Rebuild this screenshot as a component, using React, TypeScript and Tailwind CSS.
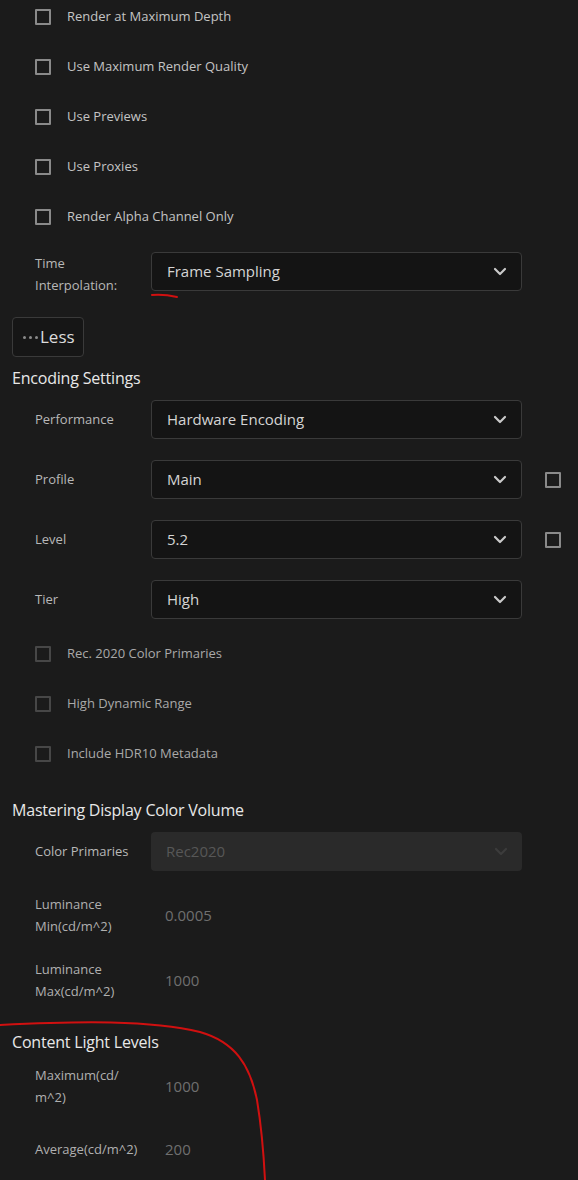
import React from 'react';

const font = { fontFamily: '"Open Sans", "Noto Sans", sans-serif' };

const Chevron = ({ dim }: { dim?: boolean }) => (
  <svg width="14" height="9" viewBox="0 0 14 9" fill="none">
    <path
      d="M2 2 L7 7 L12 2"
      stroke={dim ? '#3c3c3c' : '#c9c9c9'}
      strokeWidth="2.2"
      strokeLinecap="round"
      strokeLinejoin="round"
    />
  </svg>
);

const Box = ({ dim }: { dim?: boolean }) => (
  <span
    className={`block w-[16px] h-[16px] shrink-0 border-2 rounded-[1px] ${
      dim ? 'border-[#474747]' : 'border-[#8a8a8a]'
    }`}
  />
);

const CheckRow = ({ label, dim }: { label: string; dim?: boolean }) => (
  <div className="flex items-center h-[32px] pl-[23px] gap-[16px]">
    <Box dim={dim} />
    <span className={`text-[13px] ${dim ? 'text-[#a9a9a9]' : 'text-[#c4c4c4]'}`}>{label}</span>
  </div>
);

const Select = ({ value, disabled }: { value: string; disabled?: boolean }) => (
  <div
    className={`flex items-center justify-between w-[371px] h-[39px] pl-[15px] pr-[14px] rounded-[4px] ${
      disabled ? 'bg-[#2a2a2a]' : 'bg-[#141414] border border-[#3a3a3a]'
    }`}
  >
    <span className={`text-[15px] ${disabled ? 'text-[#575757]' : 'text-[#d4d4d4]'}`}>{value}</span>
    <Chevron dim={disabled} />
  </div>
);

const SelectRow = ({ label, value, box, disabled }: { label: string; value: string; box?: boolean; disabled?: boolean }) => (
  <div className="flex items-center pl-[23px]">
    <span className="w-[116px] text-[13px] text-[#b8b8b8]">{label}</span>
    <Select value={value} disabled={disabled} />
    {box && (
      <span className="ml-[23px]">
        <Box />
      </span>
    )}
  </div>
);

const ValueRow = ({ lines, value }: { lines: string[]; value: string }) => (
  <div className="flex items-center pl-[23px]">
    <div className="w-[130px] text-[13px] leading-[22px] text-[#b0b0b0]">
      {lines.map((l) => (
        <div key={l}>{l}</div>
      ))}
    </div>
    <span className="text-[15px] text-[#6f6f6f]">{value}</span>
  </div>
);

const Heading = ({ children }: { children: React.ReactNode }) => (
  <h3 className="text-[16px] font-medium leading-[22px] text-[#e8e8e8] tracking-[-0.2px]">{children}</h3>
);

export default function App() {
  return (
    <div className="relative w-[578px] h-[1180px] overflow-hidden bg-[#1b1b1b]" style={font}>
      <div className="flex flex-col px-[12px] pt-[1px]">
        {/* Render options */}
        <div className="flex flex-col gap-[18px]">
          <CheckRow label="Render at Maximum Depth" />
          <CheckRow label="Use Maximum Render Quality" />
          <CheckRow label="Use Previews" />
          <CheckRow label="Use Proxies" />
          <CheckRow label="Render Alpha Channel Only" />
        </div>

        <div className="flex items-start pl-[23px] mt-[19px]">
          <div className="w-[116px] text-[13px] leading-[22px] text-[#b8b8b8]">
            <div>Time</div>
            <div>Interpolation:</div>
          </div>
          <Select value="Frame Sampling" />
        </div>

        <button className="mt-[21px] self-start flex items-center w-[72px] h-[40px] pl-[10px] rounded-[4px] bg-[#161616] border border-[#3a3a3a]">
          <span className="flex items-center gap-[3px] mr-[2px]">
            <span className="block w-[3px] h-[3px] rounded-full bg-[#8a8a8a]" />
            <span className="block w-[3px] h-[3px] rounded-full bg-[#8a8a8a]" />
            <span className="block w-[3px] h-[3px] rounded-full bg-[#8a8a8a]" />
          </span>
          <span className="text-[17px] text-[#dcdcdc]">Less</span>
        </button>

        {/* Encoding */}
        <div className="mt-[10px]">
          <Heading>Encoding Settings</Heading>
        </div>
        <div className="flex flex-col gap-[21px] mt-[11px]">
          <SelectRow label="Performance" value="Hardware Encoding" />
          <SelectRow label="Profile" value="Main" box />
          <SelectRow label="Level" value="5.2" box />
          <SelectRow label="Tier" value="High" />
        </div>

        <div className="flex flex-col gap-[18px] mt-[19px]">
          <CheckRow label="Rec. 2020 Color Primaries" dim />
          <CheckRow label="High Dynamic Range" dim />
          <CheckRow label="Include HDR10 Metadata" dim />
        </div>

        {/* Mastering */}
        <div className="mt-[29px]">
          <Heading>Mastering Display Color Volume</Heading>
        </div>
        <div className="mt-[11px]">
          <SelectRow label="Color Primaries" value="Rec2020" disabled />
        </div>
        <div className="flex flex-col gap-[21px] mt-[22px]">
          <ValueRow lines={['Luminance', 'Min(cd/m^2)']} value="0.0005" />
          <ValueRow lines={['Luminance', 'Max(cd/m^2)']} value="1000" />
        </div>

        {/* Content light */}
        <div className="mt-[29px]">
          <Heading>Content Light Levels</Heading>
        </div>
        <div className="flex flex-col gap-[30px] mt-[11px]">
          <ValueRow lines={['Maximum(cd/', 'm^2)']} value="1000" />
          <ValueRow lines={['Average(cd/m^2)']} value="200" />
        </div>
      </div>

      {/* hand-drawn red annotations */}
      <svg className="absolute inset-0 pointer-events-none" width="578" height="1180" viewBox="0 0 578 1180" fill="none">
        <path d="M152 295 Q164 294 177 297" stroke="#d01010" strokeWidth="2" strokeLinecap="round" />
        <path
          d="M0 1025 C80 1021 150 1020 200 1032 C235 1042 250 1065 257 1100 C262 1130 264 1160 265 1180"
          stroke="#d01010"
          strokeWidth="2"
          strokeLinecap="round"
        />
      </svg>
    </div>
  );
}
